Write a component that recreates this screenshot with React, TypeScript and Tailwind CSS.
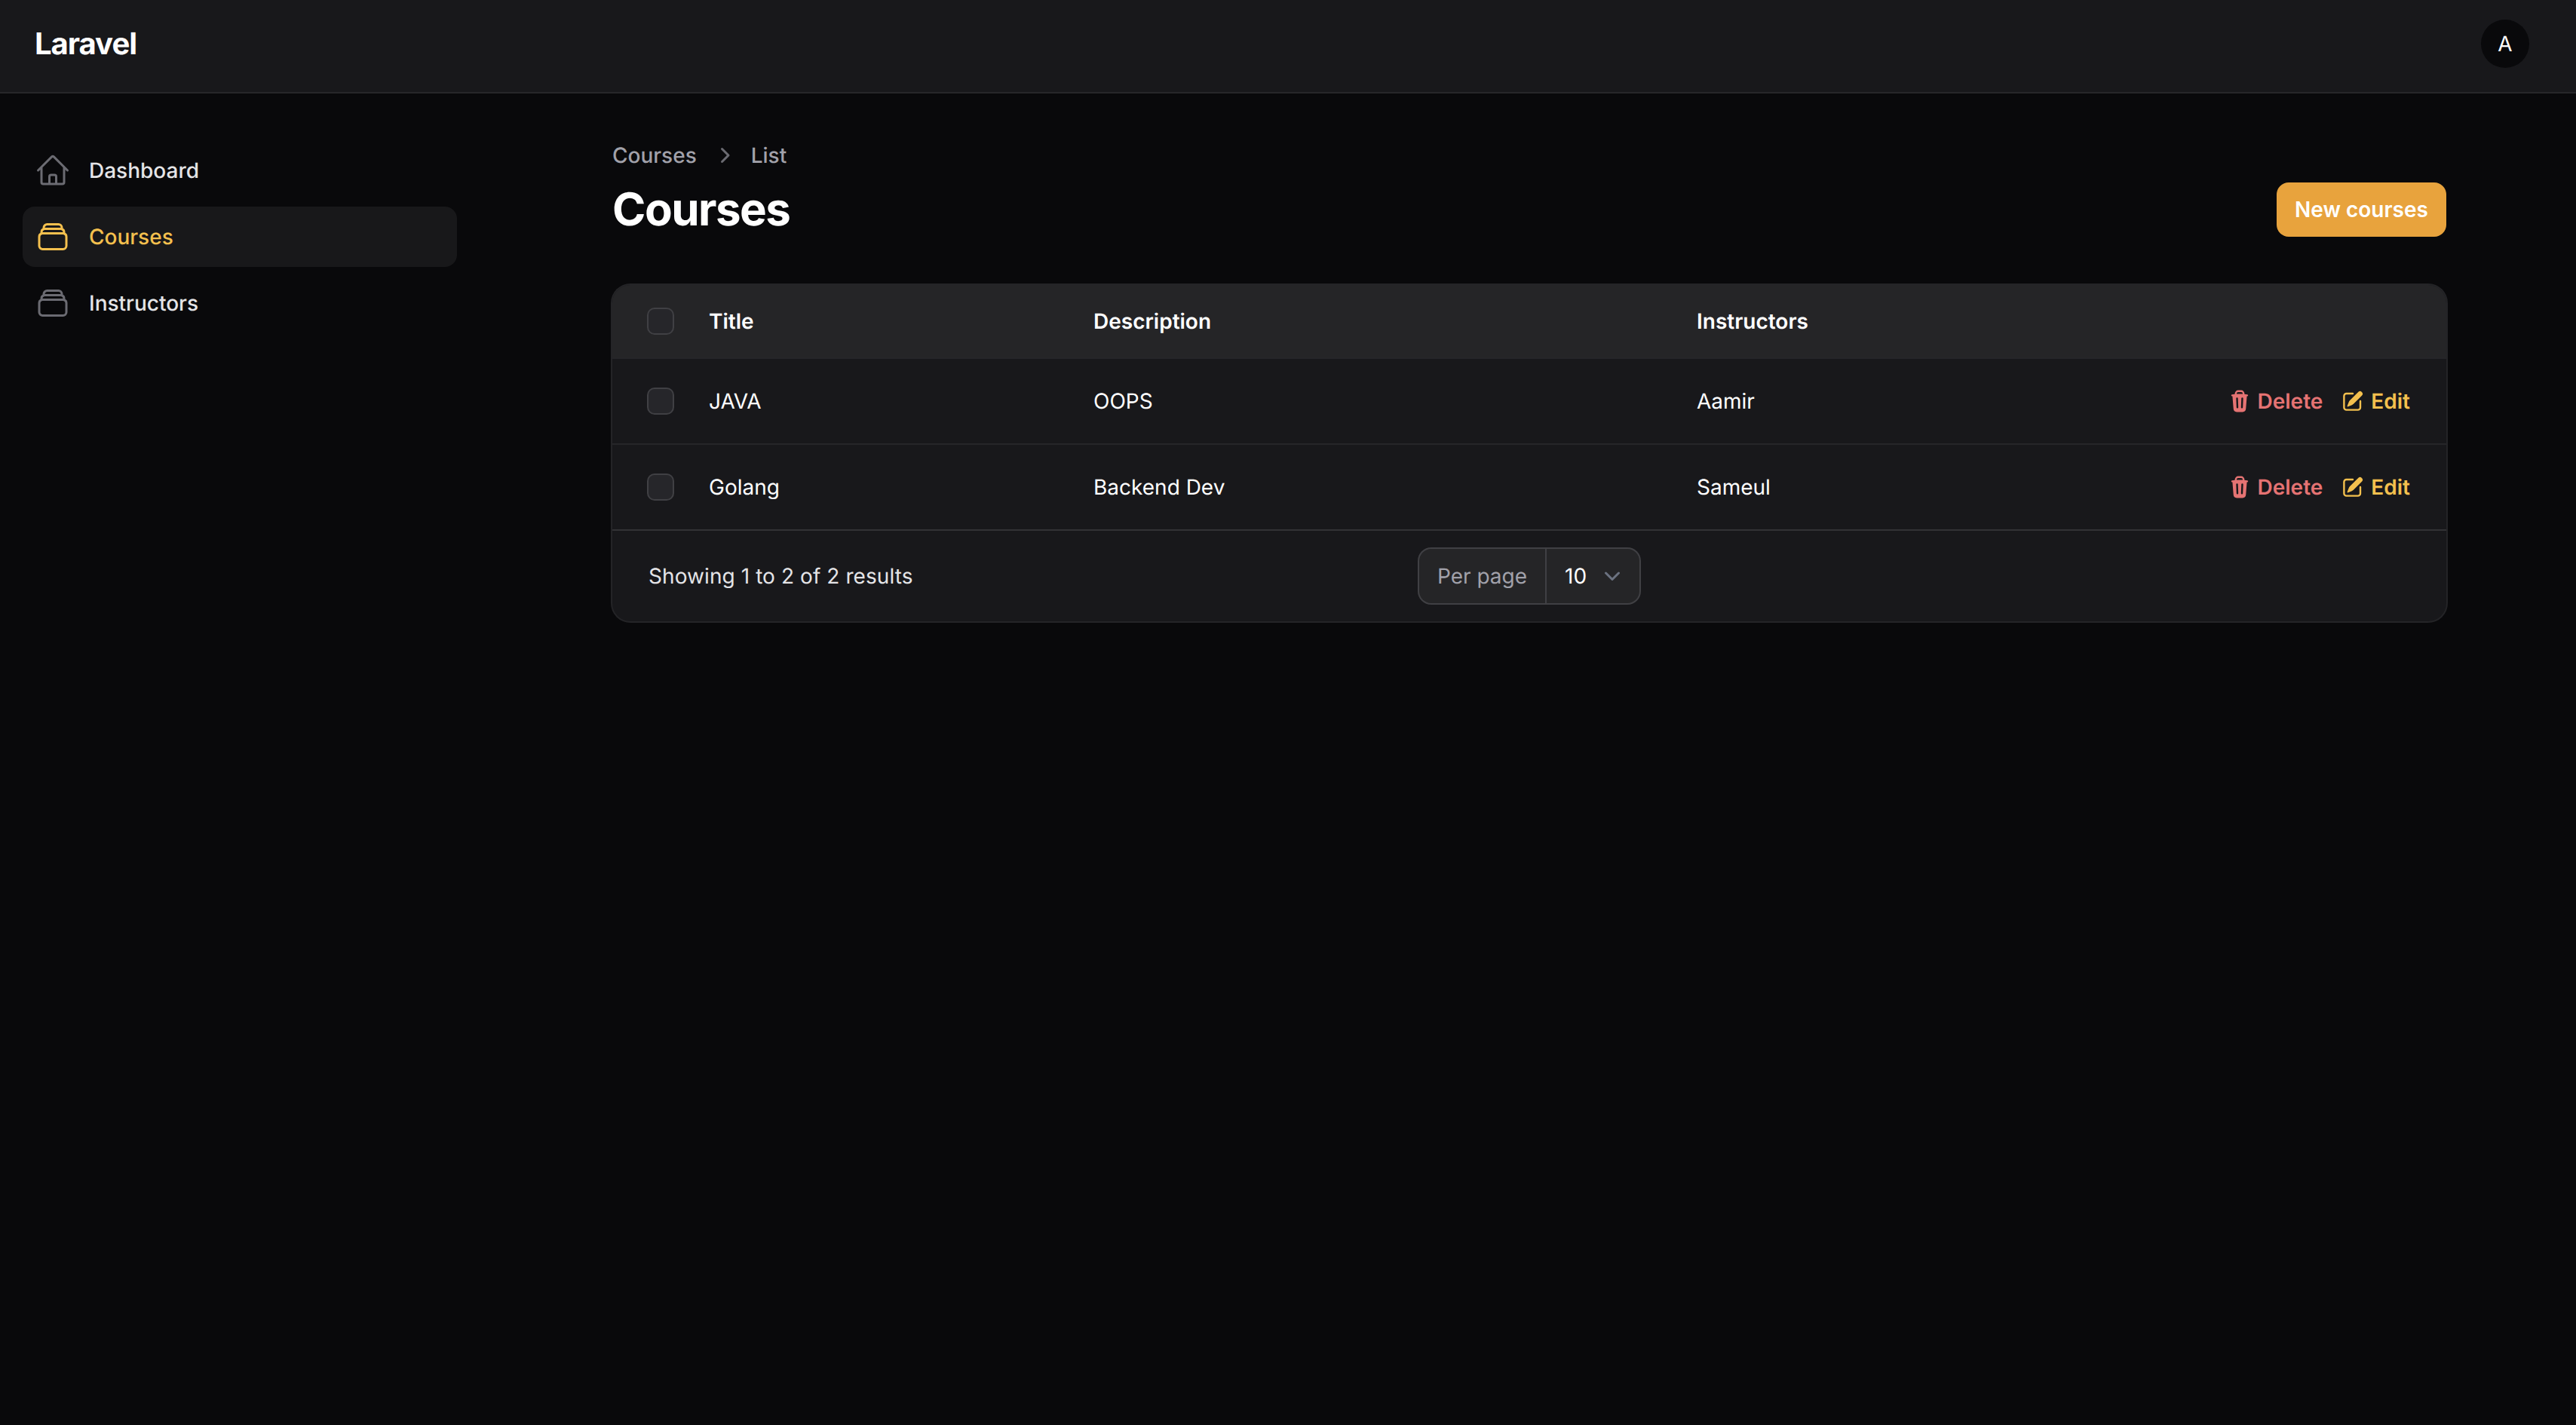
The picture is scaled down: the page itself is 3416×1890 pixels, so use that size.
import React from "react";
import {
  HiOutlineHome,
  HiOutlineRectangleStack,
  HiMiniTrash,
  HiMiniPencilSquare,
  HiMiniChevronRight,
} from "react-icons/hi2";

function NavItem({ icon, label, active }: { icon: React.ReactNode; label: string; active?: boolean }) {
  return (
    <div
      className={`flex h-[80px] items-center gap-[24px] rounded-[16px] px-[16px] text-[28px] font-medium leading-[40px] ${
        active ? "bg-[#18181a] text-[#f4c04e]" : "text-[#e4e4e7]"
      }`}
    >
      <span className={active ? "text-[#f4c04e]" : "text-[#6b6b72]"}>{icon}</span>
      <span>{label}</span>
    </div>
  );
}

function Checkbox() {
  return <div className="h-[32px] w-[32px] rounded-[8px] bg-[#26262a] ring-2 ring-[#404044]" />;
}

function Row({ title, desc, inst }: { title: string; desc: string; inst: string }) {
  return (
    <div className="flex h-[114px] items-center border-t-2 border-[#262629] bg-[#18181b] text-[28px] leading-[40px] text-white">
      <div className="w-[128px] shrink-0 pl-[48px]">
        <Checkbox />
      </div>
      <div className="w-[510px] shrink-0">{title}</div>
      <div className="w-[800px] shrink-0">{desc}</div>
      <div className="flex-1">{inst}</div>
      <div className="flex items-center gap-[24px] pr-[48px] font-semibold">
        <span className="flex items-center gap-[8px] text-[#e57373]">
          <HiMiniTrash size={32} />
          Delete
        </span>
        <span className="flex items-center gap-[8px] text-[#f4c04e]">
          <HiMiniPencilSquare size={32} />
          Edit
        </span>
      </div>
    </div>
  );
}

export default function App() {
  return (
    <div className="min-h-screen bg-[#09090b] font-['Inter',sans-serif] text-white [text-rendering:geometricPrecision]">
      <header className="flex h-[124px] items-center justify-between border-b-2 border-[#27272a] bg-[#18181b] pb-[6px] pl-[46px] pr-[62px]">
        <div className="text-[40px] font-bold leading-[50px] tracking-tight">Laravel</div>
        <div className="flex h-[64px] w-[64px] items-center justify-center rounded-full bg-[#09090b] text-[28px] font-normal">
          A
        </div>
      </header>
      <div className="flex">
        <aside className="w-[640px] shrink-0 pl-[30px] pt-[62px]">
          <nav className="flex w-[576px] flex-col gap-[8px]">
            <NavItem icon={<HiOutlineHome size={48} className="block" />} label="Dashboard" />
            <NavItem icon={<HiOutlineRectangleStack size={48} className="block" />} label="Courses" active />
            <NavItem icon={<HiOutlineRectangleStack size={48} className="block" />} label="Instructors" />
          </nav>
        </aside>
        <main className="min-w-0 flex-1 px-[172px] pt-[62px]">
          <div className="flex h-[40px] items-center text-[28px] font-medium leading-[40px] text-[#a1a1aa]">
            <span>Courses</span>
            <HiMiniChevronRight size={40} className="mx-[16px] text-[#6b6b72]" />
            <span>List</span>
          </div>
          <div className="mt-[16px] flex h-[72px] items-center justify-between">
            <h1 className="text-[60px] font-bold leading-[72px] tracking-tight text-white">Courses</h1>
            <button className="flex h-[72px] w-[225px] items-center justify-center rounded-[16px] bg-[#e8a33d] text-[28px] font-semibold text-white">
              New courses
            </button>
          </div>
          <div className="mt-[64px] overflow-hidden rounded-[24px] bg-[#18181b] ring-2 ring-[#242427]">
            <div className="flex h-[96px] items-center bg-[#252527] text-[28px] font-semibold leading-[40px] text-white">
              <div className="w-[128px] shrink-0 pl-[48px]">
                <Checkbox />
              </div>
              <div className="w-[510px] shrink-0">Title</div>
              <div className="w-[800px] shrink-0">Description</div>
              <div className="flex-1">Instructors</div>
            </div>
            <Row title="JAVA" desc="OOPS" inst="Aamir" />
            <Row title="Golang" desc="Backend Dev" inst="Sameul" />
            <div className="grid h-[122px] grid-cols-3 items-center border-t-2 border-[#323235] px-[48px] text-[28px] leading-[40px]">
              <div className="whitespace-nowrap tracking-[0.08px] text-[#e4e4e7]">Showing 1 to 2 of 2 results</div>
              <div className="flex justify-center">
                <div className="flex h-[72px] items-center rounded-[16px] bg-[#252527] ring-2 ring-[#404044]">
                  <span className="flex h-full items-center whitespace-nowrap border-r-2 border-[#404044] pl-[24px] pr-[24px] text-[#a1a1aa]">
                    Per page
                  </span>
                  <span className="flex items-center gap-[14px] pl-[24px] pr-[16px] text-white">
                    10
                    <svg width="40" height="40" viewBox="0 0 20 20" fill="none" stroke="#6b7280" strokeWidth="1.5" strokeLinecap="round" strokeLinejoin="round">
                      <path d="M5.75 8l4.25 4.25L14.25 8" />
                    </svg>
                  </span>
                </div>
              </div>
              <div />
            </div>
          </div>
        </main>
      </div>
    </div>
  );
}
